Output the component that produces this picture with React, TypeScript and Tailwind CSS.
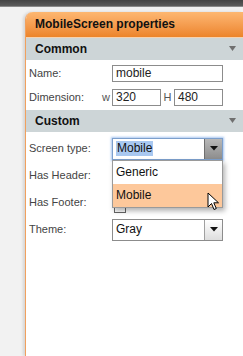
import React from 'react';

function SectionBar({ title }: { title: string }) {
  return (
    <div className="relative h-[22px] bg-[#cdd5d7] pl-[9px] text-[12px] font-bold leading-[22px] text-[#111]">
      {title}
      <svg className="absolute right-[7px] top-[8px]" width="7" height="5" viewBox="0 0 7 5">
        <path d="M0 0 H7 L3.5 5 Z" fill="#6f6f6f" />
      </svg>
    </div>
  );
}

function Caret() {
  return (
    <svg width="8" height="5" viewBox="0 0 8 5">
      <path d="M0 0 H8 L4 4.5 Z" fill="#111" />
    </svg>
  );
}

function Label({ children }: { children: React.ReactNode }) {
  return <div className="w-[83px] shrink-0 text-[11px] text-[#444]">{children}</div>;
}

export default function App() {
  return (
    <div className="w-[243px] h-[356px] overflow-hidden bg-[#f2f2f2] font-['Liberation_Sans',Arial,sans-serif]">
      <div className="h-[7px] bg-gradient-to-b from-[#444] to-[#5c5c5c] border-b border-[#8a8a8a]" />
      <div className="h-[349px] pl-[25px] pt-[5px]">
        <div className="h-full bg-white border-l border-[#f0a05e] rounded-tl-[8px] shadow-[-2px_0_3px_rgba(0,0,0,0.12)]">
          <div className="h-[25px] rounded-tl-[7px] bg-gradient-to-b from-[#fdb771] to-[#ec8429] pl-[9px] text-[12px] font-bold leading-[25px] text-[#111]">
            MobileScreen properties
          </div>
          <div className="h-px bg-[#f6d2b0]" />
          <SectionBar title="Common" />

          <div className="pl-[3px] pt-[5px] pb-[4px]">
            <div className="flex items-center h-[17px]">
              <Label>Name:</Label>
              <div className="w-[111px] h-[17px] border border-[#8c8c8c] pl-[3px] text-[12px] leading-[15px] text-[#222]">
                mobile
              </div>
            </div>
            <div className="flex items-center h-[17px] mt-[7px]">
              <div className="w-[73px] shrink-0 text-[11px] text-[#444]">Dimension:</div>
              <span className="w-[10px] text-[11px] text-[#555]">w</span>
              <div className="w-[49px] h-[17px] border border-[#8c8c8c] pl-[3px] text-[12px] leading-[15px] text-[#222]">
                320
              </div>
              <span className="w-[13px] text-center text-[11px] text-[#555]">H</span>
              <div className="w-[49px] h-[17px] border border-[#8c8c8c] pl-[3px] text-[12px] leading-[15px] text-[#222]">
                480
              </div>
            </div>
          </div>

          <SectionBar title="Custom" />

          <div className="pl-[3px] pt-[3px]">
            <div className="flex items-center h-[27px]">
              <Label>Screen type:</Label>
              <div className="relative">
                <div className="flex w-[111px] h-[22px] border border-[#7c9fcc] shadow-[0_0_2px_1px_rgba(110,160,230,0.6)] bg-white">
                  <div className="flex-1 pl-[3px] flex items-center">
                    <span className="bg-[#a9c8f0] text-[12px] leading-[15px] text-[#111] px-px">Mobile</span>
                  </div>
                  <div className="w-[18px] border-l border-[#6f6f6f] bg-gradient-to-b from-[#b8b8b8] to-[#8d8d8d] flex items-center justify-center">
                    <Caret />
                  </div>
                </div>
                <div className="absolute left-0 top-[22px] z-10 w-[111px] border border-[#9a9a9a] bg-white shadow-[2px_3px_5px_rgba(0,0,0,0.3)]">
                  <div className="h-[23px] pl-[3px] text-[12px] leading-[23px] text-[#111]">Generic</div>
                  <div className="h-[23px] pl-[3px] bg-[#fdc89b] text-[12px] leading-[23px] text-[#111]">Mobile</div>
                </div>
                <svg className="absolute left-[95px] top-[54px] z-20" width="13" height="19" viewBox="0 0 13 19">
                  <path d="M1 1 V15 L4.5 11.5 L7 17.5 L9.3 16.5 L6.8 10.8 L11.5 10.8 Z" fill="#fff" stroke="#000" strokeWidth="1" strokeLinejoin="round" />
                </svg>
              </div>
            </div>
            <div className="flex items-center h-[27px]">
              <Label>Has Header:</Label>
              <div className="w-[12px] h-[12px] border border-[#666] bg-white ml-[2px]" />
            </div>
            <div className="flex items-center h-[27px]">
              <Label>Has Footer:</Label>
              <div className="w-[12px] h-[12px] border border-[#666] bg-white ml-[2px] mt-[8px] flex items-center justify-center">
                <svg width="5" height="3" viewBox="0 0 5 3"><path d="M0 0 H5 L2.5 3 Z" fill="#333" /></svg>
              </div>
            </div>
            <div className="flex items-center h-[27px]">
              <Label>Theme:</Label>
              <div className="flex w-[111px] h-[22px] border border-[#8c8c8c] bg-white">
                <div className="flex-1 pl-[3px] text-[12px] leading-[18px] text-[#111]">Gray</div>
                <div className="w-[18px] border-l border-[#a0a0a0] bg-gradient-to-b from-[#fff] to-[#dedede] flex items-center justify-center">
                  <Caret />
                </div>
              </div>
            </div>
          </div>
        </div>
      </div>
    </div>
  );
}
